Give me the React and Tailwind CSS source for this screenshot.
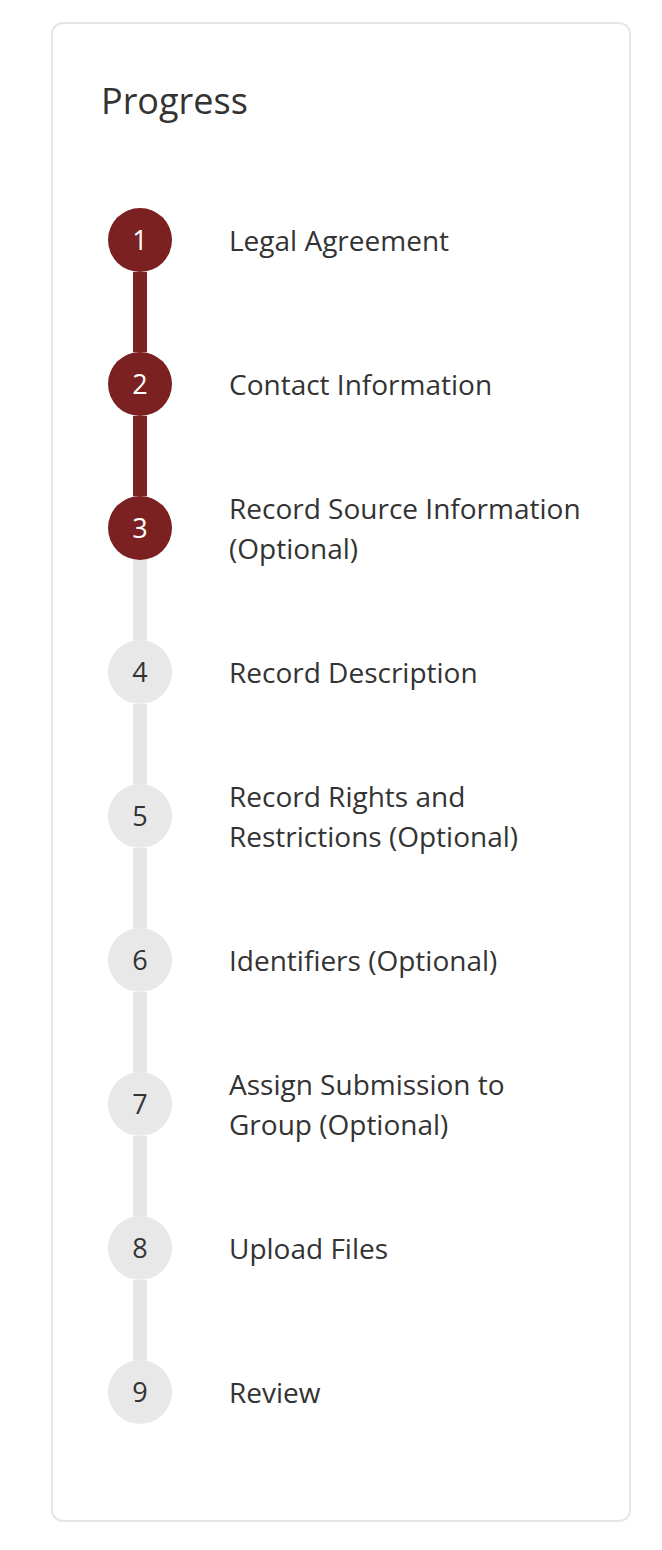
import React from "react";

const steps = [
  ["Legal Agreement"],
  ["Contact Information"],
  ["Record Source Information", "(Optional)"],
  ["Record Description"],
  ["Record Rights and", "Restrictions (Optional)"],
  ["Identifiers (Optional)"],
  ["Assign Submission to", "Group (Optional)"],
  ["Upload Files"],
  ["Review"],
];

const CURRENT = 3;

export default function App() {
  return (
    <div
      className="min-h-[1550px] bg-white pt-[22px] pl-[51px]"
      style={{ fontFamily: '"Open Sans", "Noto Sans", sans-serif' }}
    >
      <div className="w-[580px] h-[1500px] border-2 border-[#e6e6e6] rounded-[12px] pt-[51px] pl-[48px]">
        <h2 className="text-[36px] leading-[51px] text-[#333] font-normal">Progress</h2>
        <div className="mt-[82px] flex flex-col">
          {steps.map((lines, i) => {
            const n = i + 1;
            const active = n <= CURRENT;
            const last = i === steps.length - 1;
            const lineActive = n + 1 <= CURRENT;
            return (
              <div key={n} className="flex flex-col">
                <div className="flex items-center h-[64px]">
                  <div
                    className={
                      "w-[64px] h-[64px] rounded-full flex items-center justify-center text-[27px] shrink-0 ml-[7px] " +
                      (active ? "bg-[#7b2121] text-white" : "bg-[#e8e8e8] text-[#333]")
                    }
                  >
                    {n}
                  </div>
                  <div className="ml-[57px] h-[64px] flex flex-col justify-center text-[28px] leading-[40px] text-[#333] whitespace-nowrap">
                    {lines.map((l) => (
                      <div key={l}>{l}</div>
                    ))}
                  </div>
                </div>
                {!last && (
                  <div
                    className={
                      "ml-[32px] w-[14px] h-[80px] " +
                      (lineActive ? "bg-[#7b2121]" : "bg-[#e6e6e6]")
                    }
                  />
                )}
              </div>
            );
          })}
        </div>
      </div>
    </div>
  );
}
